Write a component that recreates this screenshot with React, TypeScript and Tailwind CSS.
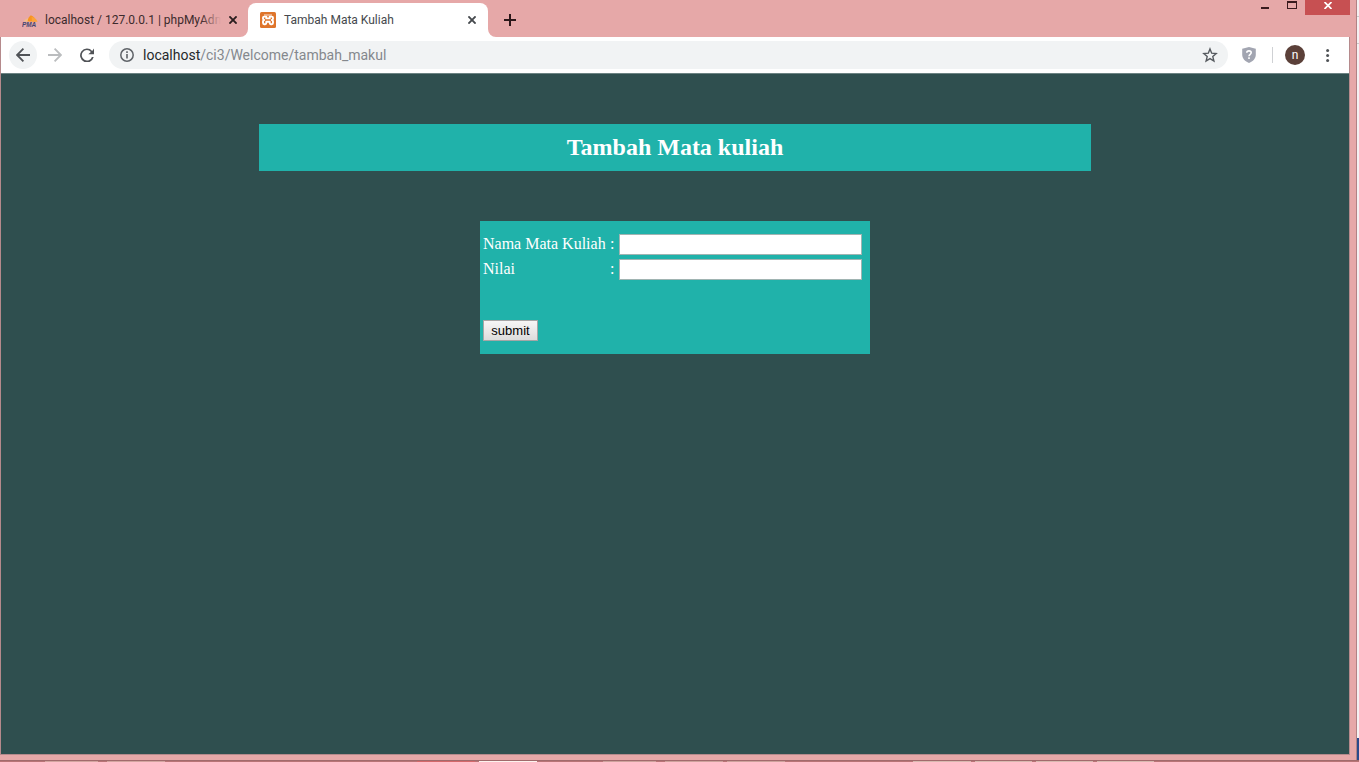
import type { ReactNode } from "react";

function IconButton({ label, className, children }: { label: string; className: string; children: ReactNode }) {
  return (
    <button type="button" aria-label={label} className={`flex shrink-0 items-center justify-center ${className}`}>
      {children}
    </button>
  );
}

function CloseGlyph({ color }: { color: string }) {
  return (
    <svg width="8" height="8" viewBox="0 0 8 8" fill="none" stroke={color} strokeWidth="1.9">
      <path d="M0.4 0.4 7.6 7.6M7.6 0.4 0.4 7.6" />
    </svg>
  );
}

function PmaLogo() {
  return (
    <svg width="16" height="16" viewBox="0 0 16 16" className="shrink-0">
      <path d="M1.5 9.6C3 7.4 5 6.2 8 5.8L7.2 9.6Z" fill="#f2bd88" />
      <path d="M5.6 9.6C5.8 6.6 7 4.6 8.8 3.2 11.6 4.2 13.4 6.4 14 9.6Z" fill="#f79420" />
      <path d="M9.6 5C12.4 5.4 14.8 7 15.6 9.8H10Z" fill="#fba23a" />
      <text x="0" y="15" fontFamily="Liberation Sans, sans-serif" fontSize="6.4" fontWeight="700" fontStyle="italic" fill="#45456f">
        PMA
      </text>
    </svg>
  );
}

function XamppLogo() {
  return (
    <svg width="16" height="16" viewBox="0 0 16 16" className="shrink-0">
      <rect width="16" height="16" rx="1.5" fill="#df752b" />
      <g fill="none" stroke="#fff" strokeWidth="1.9" strokeLinejoin="round" strokeLinecap="round">
        <path d="M4.4 3H11.6" strokeWidth="0.8" />
        <path d="M6.3 6.4V4.6H4.2Q3 4.6 3 5.8V6.6Q3 8 4.2 8 3 8 3 9.4V10.8Q3 12.2 4.2 12.2H5.2Q6.3 12.2 6.3 11V9.8H9.7V11Q9.7 12.2 10.8 12.2H11.8Q13 12.2 13 10.8V9.4Q13 8 11.8 8 13 8 13 6.6V5.8Q13 4.6 11.8 4.6H9.7V6.4Z" />
      </g>
    </svg>
  );
}

function TabStrip() {
  return (
    <header className="flex h-[37px] items-start">
      <div className="flex h-full w-[248px] shrink-0 items-center gap-[7px] pt-[3px] pr-[11px] pl-[22px]">
        <PmaLogo />
        <div className="relative w-[176px] shrink-0 overflow-hidden text-[12px] leading-4 whitespace-nowrap text-[#3c2a2c]">
          localhost / 127.0.0.1 | phpMyAdm
          <span className="absolute inset-y-0 right-0 w-5 bg-gradient-to-r from-transparent to-[#e6a8a8]" />
        </div>
        <IconButton label="Close phpMyAdmin tab" className="ml-auto size-2">
          <CloseGlyph color="#2b1d1e" />
        </IconButton>
      </div>
      <div className="relative mt-[3px] flex h-[34px] w-60 shrink-0 items-center gap-2 rounded-t-lg bg-white px-3">
        <svg width="8" height="8" viewBox="0 0 8 8" className="absolute bottom-0 -left-2">
          <path d="M8 0V8H0A8 8 0 0 0 8 0Z" fill="#fff" />
        </svg>
        <svg width="8" height="8" viewBox="0 0 8 8" className="absolute -right-2 bottom-0">
          <path d="M0 0V8H8A8 8 0 0 1 0 0Z" fill="#fff" />
        </svg>
        <XamppLogo />
        <span className="flex-1 text-[12px] leading-4 whitespace-nowrap text-[#45494d]">Tambah Mata Kuliah</span>
        <IconButton label="Close tab" className="size-2">
          <CloseGlyph color="#45494d" />
        </IconButton>
      </div>
      <IconButton label="New tab" className="mt-[6px] ml-2 size-7">
        <svg width="12" height="12" viewBox="0 0 12 12" stroke="#2b1719" strokeWidth="2">
          <path d="M6 0V12M0 6H12" />
        </svg>
      </IconButton>
      <div className="ml-auto flex h-[15px] items-start">
        <IconButton label="Minimize" className="h-4 w-7">
          <svg width="10" height="10" viewBox="0 0 10 10">
            <path d="M1 4H9V6H1Z" fill="#3a1b1e" />
          </svg>
        </IconButton>
        <IconButton label="Maximize" className="h-[11px] w-[26px]">
          <svg width="10" height="9" viewBox="0 0 10 9">
            <path d="M0 0H10V8H0ZM1 2V7H9V2Z" fill="#3a1b1e" fillRule="evenodd" />
          </svg>
        </IconButton>
        <IconButton label="Close window" className="h-[15px] w-[45px] bg-[#c75052] pb-1">
          <svg width="8" height="7" viewBox="0 0 8 7" fill="none" stroke="#fff" strokeWidth="1.7">
            <path d="M0.5 0 7.5 7M7.5 0 0.5 7" />
          </svg>
        </IconButton>
      </div>
    </header>
  );
}

function Toolbar() {
  return (
    <nav className="flex h-9 items-center bg-white pr-[13px] pl-2">
      <IconButton label="Back" className="size-7 rounded-full bg-[#f1f3f4]">
        <svg width="14" height="14" viewBox="0 0 14 14" fill="none" stroke="#505357" strokeWidth="1.8">
          <path d="M14 7H1.5M7.4 0.7 1.1 7 7.4 13.3" />
        </svg>
      </IconButton>
      <IconButton label="Forward" className="ml-1 size-7">
        <svg width="14" height="14" viewBox="0 0 14 14" fill="none" stroke="#bbbdbf" strokeWidth="1.8">
          <path d="M0 7H12.5M6.6 0.7 12.9 7 6.6 13.3" />
        </svg>
      </IconButton>
      <IconButton label="Reload" className="ml-1 size-7">
        <svg width="14" height="14" viewBox="0 0 14 14">
          <path d="M12.2 2.9A6.9 6.9 0 1 0 13.7 9H11.9A5.2 5.2 0 1 1 10.9 3.9L8.3 6.2H14V0.6Z" fill="#505357" />
        </svg>
      </IconButton>
      <div className="ml-2 flex h-7 flex-1 items-center rounded-full bg-[#f1f3f4] pr-[10px] pl-[11px]">
        <svg width="14" height="14" viewBox="0 0 14 14" className="shrink-0">
          <circle cx="7" cy="7" r="6.2" fill="none" stroke="#5f6368" strokeWidth="1.5" />
          <path d="M6.2 6H7.8V10.6H6.2ZM6.2 3.3H7.8V4.9H6.2Z" fill="#5f6368" />
        </svg>
        <div className="ml-[9px] flex-1 text-[14px] leading-5 text-[#84888d]">
          <span className="text-[#26282b]">localhost</span>/ci3/Welcome/tambah_makul
        </div>
        <IconButton label="Bookmark this page" className="size-4">
          <svg width="16" height="16" viewBox="0 0 16 16" fill="none" stroke="#55595e" strokeWidth="1.4">
            <path d="M8 1.9 9.7 6.2 14.2 6.6 10.8 9.6 11.9 14 8 11.6 4.1 14 5.2 9.6 1.8 6.6 6.3 6.2Z" />
          </svg>
        </IconButton>
      </div>
      <IconButton label="Extension" className="ml-[13px] size-4">
        <svg width="16" height="16" viewBox="0 0 16 16">
          <path d="M8 0 14.8 1.8V7.6C14.8 11.6 12 14.6 8 16 4 14.6 1.2 11.6 1.2 7.6V1.8Z" fill="#a2a5b1" />
          <path d="M5.8 5.8C5.8 3.2 10.2 3.2 10.2 5.8 10.2 7.3 8 7.4 8 9.2" fill="none" stroke="#fff" strokeWidth="1.6" />
          <path d="M7.2 10.2H8.8V11.9H7.2Z" fill="#fff" />
        </svg>
      </IconButton>
      <span className="ml-[15px] h-4 w-px bg-[#cfd1d4]" />
      <IconButton label="Profile n" className="ml-3 size-5 rounded-full bg-[#5b4039] text-[12px] leading-5 text-white">
        n
      </IconButton>
      <IconButton label="Menu" className="ml-[15px] h-4 w-4">
        <svg width="4" height="14" viewBox="0 0 4 14" fill="#505357">
          <circle cx="1.6" cy="2.5" r="1.5" />
          <circle cx="1.6" cy="7.5" r="1.5" />
          <circle cx="1.6" cy="12.4" r="1.5" />
        </svg>
      </IconButton>
    </nav>
  );
}

function Field({ id, label }: { id: string; label: string }) {
  return (
    <div className="flex items-start">
      <label htmlFor={id} className="w-[127px] shrink-0">
        {label}
      </label>
      <span className="w-[9px] shrink-0">:</span>
      <input
        id={id}
        name={id}
        type="text"
        className="h-[21px] min-w-0 flex-1 border border-[#a0b4b2] bg-white px-px font-['Liberation_Sans',Arial,sans-serif] text-[13px] text-black"
      />
    </div>
  );
}

function Page() {
  return (
    <main className="flex flex-1 flex-col items-center gap-[50px] border-t border-[#6c8383] bg-[#2f4f4f] pt-[50px] font-['Liberation_Serif','Times_New_Roman',serif] text-white">
      <h1 className="w-full max-w-[832px] bg-[#20b2aa] py-[10px] text-center text-[24px] leading-[27px] font-bold">
        Tambah Mata kuliah
      </h1>
      <form className="w-full max-w-[390px] bg-[#20b2aa] pt-[13px] pr-2 pb-[13px] pl-[3px] text-[16px] leading-[19px]" onSubmit={(e) => e.preventDefault()}>
        <div className="flex flex-col gap-1">
          <Field id="nama" label="Nama Mata Kuliah" />
          <Field id="nilai" label="Nilai" />
        </div>
        <button
          type="submit"
          className="mt-10 block h-[21px] w-[55px] border border-[#a6a6a6] bg-gradient-to-b from-[#f6f6f6] to-[#dcdcdc] text-center font-['Liberation_Sans',Arial,sans-serif] text-[13px] leading-[19px] text-black"
        >
          submit
        </button>
      </form>
    </main>
  );
}

const taskbarSlots = [
  "ml-[45px] w-[53px] bg-[#d3a5a0]",
  "ml-[9px] w-[58px] bg-[#d3a5a0]",
  "ml-[252px] w-[58px] bg-[#d4686a]",
  "ml-1 w-[58px] bg-[#fdf3ee]",
  "ml-[66px] w-[53px] bg-[#cda29c]",
  "ml-[9px] w-[58px] bg-[#cda29c]",
  "ml-1 w-[58px] bg-[#cda29c]",
  "ml-[128px] w-[58px] bg-[#d8b9b0]",
  "ml-1 w-[57px] bg-[#d8b9b0]",
  "ml-1 w-[57px] bg-[#d8b9b0]",
  "ml-1 w-[57px] bg-[#d8b9b0]",
];

export default function App() {
  return (
    <div className="flex min-h-screen flex-col bg-[#e6a8a8] font-['Roboto','Noto_Sans',sans-serif]">
      <div className="flex flex-1">
        <div className="flex flex-1 flex-col pr-[6px] pb-[5px]">
          <TabStrip />
          <div className="flex flex-1 flex-col border-r border-b border-l border-[#b58a8c]">
            <Toolbar />
            <Page />
          </div>
        </div>
        <div className="flex w-[3px] flex-col border-l border-[#b18385] bg-[#f5f1f2]">
          <span className="mt-4 h-px bg-[#c9c9c9]" />
          <span className="mt-[26px] h-px bg-[#c9c9c9]" />
          <span className="mt-auto h-[22px] bg-[#2b4a8b]" />
        </div>
      </div>
      <div className="flex h-[2px] overflow-hidden border-t border-[#a26a6c] bg-[#b87476]">
        {taskbarSlots.map((slot, i) => (
          <span key={i} className={`h-px shrink-0 ${slot}`} />
        ))}
      </div>
    </div>
  );
}
